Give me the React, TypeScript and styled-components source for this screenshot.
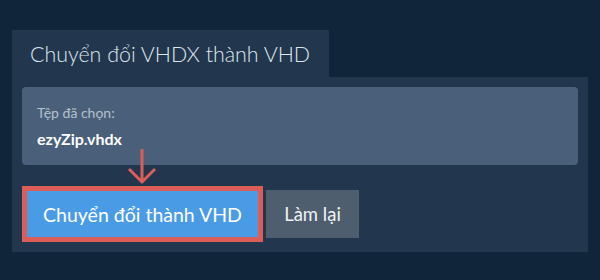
import styled, { createGlobalStyle } from "styled-components"

const Global = createGlobalStyle`
  html, body {
    margin: 0;
    padding: 0;
    background: #10243a;
    font-family: Lato, "Noto Sans", sans-serif;
  }
`

const Page = styled.div`
  width: 600px;
  height: 280px;
  padding: 30px 0 0 12px;
  box-sizing: border-box;
`

const Tab = styled.div`
  width: 317px;
  height: 47px;
  background: #22374d;
  color: #dfe6ee;
  font-size: 21.4px;
  font-weight: 300;
  white-space: nowrap;
  display: flex;
  align-items: center;
  padding-left: 18px;
  box-sizing: border-box;
`

const Panel = styled.div`
  width: 576px;
  background: #22374d;
  padding: 10px;
  box-sizing: border-box;
`

const FileBox = styled.div`
  height: 78px;
  background: #4a607a;
  border-radius: 4px;
  padding: 17px 15px 0;
  box-sizing: border-box;
`

const Label = styled.div`
  color: #b4c0cc;
  font-size: 14px;
  line-height: 18px;
`

const FileName = styled.div`
  color: #ffffff;
  font-size: 16px;
  font-weight: 700;
  line-height: 20px;
  margin-top: 7px;
`

const Actions = styled.div`
  display: flex;
  align-items: center;
  gap: 3px;
  margin-top: 21px;
`

const Highlight = styled.div`
  position: relative;
  border: 5px solid #dc5c58;
`

const Arrow = styled.svg`
  position: absolute;
  left: 100px;
  top: -43px;
`

const Button = styled.button<{ $primary?: boolean }>`
  border: none;
  margin: 0;
  display: block;
  height: ${p => (p.$primary ? "46px" : "48px")};
  width: ${p => (p.$primary ? "231px" : "93px")};
  padding: 0;
  background: ${p => (p.$primary ? "#4a9be6" : "#4f5e6e")};
  color: ${p => (p.$primary ? "#ffffff" : "#eef2f6")};
  font-family: Lato, "Noto Sans", sans-serif;
  font-size: ${p => (p.$primary ? "19.5px" : "18.5px")};
  cursor: pointer;
`

const App = () => {
  return (
    <Page>
      <Global />
      <Tab>Chuyển đổi VHDX thành VHD</Tab>
      <Panel>
        <FileBox>
          <Label>Tệp đã chọn:</Label>
          <FileName>ezyZip.vhdx</FileName>
        </FileBox>
        <Actions>
          <Highlight>
            <Arrow width="30" height="37" viewBox="0 0 30 37">
              <path d="M15 1 V34 M2 21 L15 34 L28 21" stroke="#dc5c58" strokeWidth="3" fill="none" />
            </Arrow>
            <Button $primary>Chuyển đổi thành VHD</Button>
          </Highlight>
          <Button>Làm lại</Button>
        </Actions>
      </Panel>
    </Page>
  )
}

export default App
